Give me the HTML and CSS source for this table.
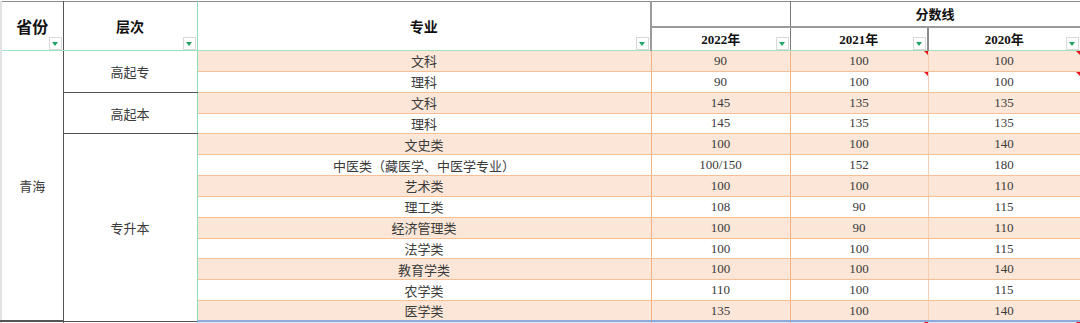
FILE: index.html
```html
<!DOCTYPE html>
<html lang="zh">
<head>
<meta charset="utf-8">
<title>青海 分数线</title>
<link rel="stylesheet" href="styles.css">
</head>
<body>
<table class="sheet">
  <colgroup>
    <col class="c-prov"><col class="c-level"><col class="c-major"><col class="c-y22"><col class="c-y21"><col class="c-y20">
  </colgroup>
  <thead>
    <tr class="h1">
      <th rowspan="2" class="hd prov-h big">省份<span class="dd"></span></th>
      <th rowspan="2" class="hd level-h">层次<span class="dd"></span></th>
      <th rowspan="2" class="hd major-h">专业<span class="dd"></span></th>
      <th class="blank"></th>
      <th colspan="2" class="score-h">分数线</th>
    </tr>
    <tr class="h2">
      <th class="yr y22">2022年<span class="dd"></span></th>
      <th class="yr y21">2021年<span class="dd"></span></th>
      <th class="yr y20">2020年<span class="dd"></span></th>
    </tr>
  </thead>
  <tbody>
    <tr class="odd">
      <td rowspan="13" class="prov">青海</td>
      <td rowspan="2" class="level">高起专</td>
      <td class="major">文科</td><td class="n22">90</td><td class="n21 mark">100</td><td class="n20 mark">100</td>
    </tr>
    <tr class="even">
      <td class="major">理科</td><td class="n22">90</td><td class="n21 mark">100</td><td class="n20 mark">100</td>
    </tr>
    <tr class="odd">
      <td rowspan="2" class="level">高起本</td>
      <td class="major">文科</td><td class="n22">145</td><td class="n21">135</td><td class="n20">135</td>
    </tr>
    <tr class="even">
      <td class="major">理科</td><td class="n22">145</td><td class="n21">135</td><td class="n20">135</td>
    </tr>
    <tr class="odd">
      <td rowspan="9" class="level">专升本</td>
      <td class="major">文史类</td><td class="n22">100</td><td class="n21">100</td><td class="n20">140</td>
    </tr>
    <tr class="even">
      <td class="major">中医类（藏医学、中医学专业）</td><td class="n22">100/150</td><td class="n21">152</td><td class="n20">180</td>
    </tr>
    <tr class="odd">
      <td class="major">艺术类</td><td class="n22">100</td><td class="n21">100</td><td class="n20">110</td>
    </tr>
    <tr class="even">
      <td class="major">理工类</td><td class="n22">108</td><td class="n21">90</td><td class="n20">115</td>
    </tr>
    <tr class="odd">
      <td class="major">经济管理类</td><td class="n22">100</td><td class="n21">90</td><td class="n20">110</td>
    </tr>
    <tr class="even">
      <td class="major">法学类</td><td class="n22">100</td><td class="n21">100</td><td class="n20">115</td>
    </tr>
    <tr class="odd">
      <td class="major">教育学类</td><td class="n22">100</td><td class="n21">100</td><td class="n20">140</td>
    </tr>
    <tr class="even">
      <td class="major">农学类</td><td class="n22">110</td><td class="n21">100</td><td class="n20">115</td>
    </tr>
    <tr class="odd last">
      <td class="major">医学类</td><td class="n22">135</td><td class="n21">100</td><td class="n20">140</td>
    </tr>
    <tr class="next">
      <td class="prov"></td><td class="level"></td><td class="major"></td><td class="n22"></td><td class="n21 mark"></td><td class="n20 mark"></td>
    </tr>
  </tbody>
</table>
</body>
</html>
```

FILE: styles.css
```css
html, body {
  margin: 0;
  padding: 0;
  background: #ffffff;
  overflow: hidden;
}

body {
  font-family: "Liberation Serif", "Noto Sans CJK SC", serif;
  color: #3a3a3a;
}

.sheet {
  border-collapse: collapse;
  table-layout: fixed;
  width: 1079px;
  margin-top: 1px;
  font-size: 13px;
  border-top: 1px solid #8c8c8c;
}

.c-prov { width: 62px; }
.c-level { width: 134px; }
.c-major { width: 454px; }
.c-y22 { width: 139px; }
.c-y21 { width: 138px; }
.c-y20 { width: 152px; }

.sheet th,
.sheet td {
  padding: 0;
  text-align: center;
  vertical-align: middle;
  position: relative;
  white-space: nowrap;
}

/* header */
.sheet th {
  color: #111;
  font-weight: bold;
  font-family: "Liberation Serif", "Noto Sans CJK SC", serif;
}

.h1 { height: 25px; }
.h2 { height: 24px; }

.hd {
  font-size: 14px;
  padding-top: 2px;
  border-bottom: 1px solid #9fe1c1;
}

.big { font-size: 16px; }

.prov-h { border-right: 1px solid #555; border-left: 2px solid #e2e2e2; }
.level-h { border-right: 1px solid #8fdcb8; }
.major-h { border-right: 2px solid #9a9a9a; }

.blank {
  border-right: 1px solid #7a7a7a;
  border-bottom: 2px solid #9a9a9a;
}

.score-h {
  font-size: 13px;
  padding-top: 3px;
  border-bottom: 2px solid #9a9a9a;
  border-right: 1px solid #9a9a9a;
}

.yr {
  font-size: 13px;
  padding-top: 3px;
  border-bottom: 1px solid #9fe1c1;
}
.y22 { border-right: 1px solid #7a7a7a; }
.y21 { border-right: 2px solid #8c8c8c; }
.y20 { border-right: 1px solid #9a9a9a; }

/* filter dropdown buttons */
.dd {
  position: absolute;
  right: 1px;
  bottom: 0;
  width: 13px;
  height: 13px;
  background: #fff;
  border: 1px solid #d9d9d9;
  box-sizing: border-box;
}
.dd::after {
  content: "";
  position: absolute;
  left: 2px;
  top: 4px;
  border-left: 3.5px solid transparent;
  border-right: 3.5px solid transparent;
  border-top: 4px solid #1fa463;
}

/* body */
tbody tr { height: 20.85px; }

.odd .major, .odd .n22, .odd .n21, .odd .n20 { background: #fbe6d7; }
.even .major, .even .n22, .even .n21, .even .n20 { background: #ffffff; }

.prov {
  border-left: 2px solid #e2e2e2;
  border-right: 1px solid #555;
  border-bottom: 2px solid #555;
}

.level {
  border-right: 1px solid #8fdcb8;
  border-bottom: 1px solid #555;
}

.major, .n22, .n21, .n20 {
  border-bottom: 1px solid #f6bf96;
}
.major { border-right: 1px solid #f4b183; }
.n22 { border-right: 1px solid #f4b183; }
.n21 { border-right: 1px solid #f8cdb0; }
.n20 { border-right: 1px solid #e0b89a; }

.last .major, .last .n22, .last .n21, .last .n20 {
  border-bottom: 2px solid #8eaadb;
}
.last .level { border-bottom: 2px solid #555; }

.next .major, .next .n22, .next .n21, .next .n20 { background: #dde6f4; }

/* comment markers */
.mark::after {
  content: "";
  position: absolute;
  right: 0;
  top: 0;
  border-left: 4px solid transparent;
  border-top: 4px solid #e8141c;
}
```
